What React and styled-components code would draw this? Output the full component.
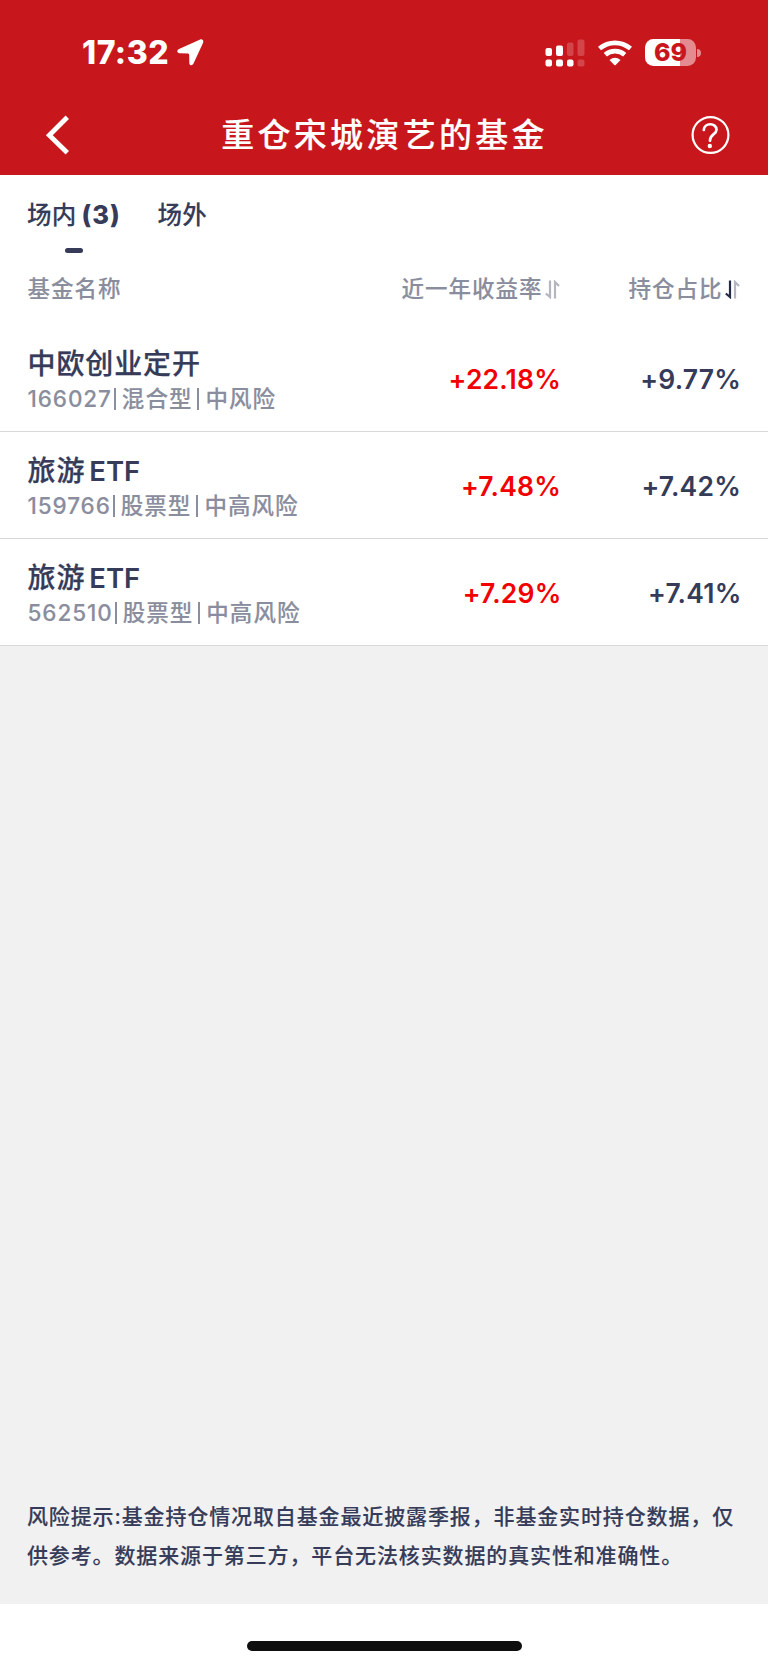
import React, { useState } from "react";
import styled, { createGlobalStyle } from "styled-components";

const GlobalStyle = createGlobalStyle`
	* {
		box-sizing: border-box;
	}
	body {
		margin: 0;
		background: #fff;
		font-family: Inter, "Noto Sans CJK SC", sans-serif;
		font-weight: 500;
		color: #353b59;
		-webkit-text-stroke: 0.12px currentColor;
	}
	button {
		padding: 0;
		border: 0;
		background: none;
		font: inherit;
		color: inherit;
	}
`;

const Page = styled.div`
	display: flex;
	flex-direction: column;
	width: 768px;
	height: 1665px;
	overflow: hidden;
	background: #f1f1f1;
`;

const Header = styled.header`
	flex: none;
	height: 174.5px;
	background: #c7171c;
	color: #fff;
`;

const StatusBar = styled.div`
	display: flex;
	align-items: center;
	justify-content: space-between;
	height: 96px;
	padding: 9px 67.5px 0 82px;
`;

const StatusGroup = styled.div`
	display: flex;
	align-items: center;
	gap: ${props => props.$gap}px;
`;

const Time = styled.span`
	width: 87px;
	font-size: 32px;
	font-weight: 800;
	line-height: 38px;
	letter-spacing: 0.5px;
	white-space: nowrap;
	-webkit-text-stroke: 0;
`;

const Battery = styled.div`
	display: flex;
	align-items: center;
	gap: 1px;
`;

const BatteryBody = styled.div`
	width: 51px;
	height: 27px;
	border-radius: 8.5px;
	background: linear-gradient(90deg, #fff 69%, #e38b8e 69%);
	color: #c7171c;
	font-size: 25px;
	font-weight: 800;
	line-height: 27px;
	text-align: center;
	-webkit-text-stroke: 0;
`;

const BatteryCap = styled.div`
	width: 3.5px;
	height: 8px;
	border-radius: 0 4px 4px 0;
	background: #e38b8e;
`;

const NavBar = styled.div`
	display: flex;
	align-items: center;
	justify-content: space-between;
	height: 78px;
	padding: 0 38px 0 45px;
`;

const NavButton = styled.button`
	display: flex;
	width: ${props => props.$width}px;
	justify-content: ${props => props.$align};
`;

const Title = styled.h1`
	margin: 0;
	font-size: 33px;
	font-weight: 500;
	line-height: 48px;
	letter-spacing: 3.3px;
`;

const Panel = styled.main`
	flex: none;
	background: #fff;
`;

const Tabs = styled.nav`
	display: flex;
	gap: 37px;
	height: 82px;
	padding: 21px 27px 0;
`;

const Tab = styled.button`
	display: flex;
	flex-direction: column;
	align-items: center;
	font-size: 24.5px;
	line-height: 38px;
	letter-spacing: 0.3px;
	&:after {
		content: '';
		width: 18px;
		height: 5.5px;
		margin-top: 14px;
		border-radius: 3px;
		background: ${props => props.$active ? "#353b59" : "transparent"};
	}
`;

const Count = styled.b`
	margin-left: 5px;
	font-size: 25.5px;
	font-weight: 800;
	letter-spacing: 0.9px;
	-webkit-text-stroke: 0;
`;

const Columns = styled.div`
	display: grid;
	grid-template-columns: 1fr 260px 180px;
	align-items: center;
	padding: 0 28px 0 27.5px;
`;

const HeadRow = styled(Columns)`
	height: 68px;
	padding-bottom: 3px;
	color: #8a8d9d;
	font-size: 22.5px;
	line-height: 34px;
	letter-spacing: 1px;
`;

const HeadCell = styled.div`
	display: flex;
	align-items: center;
	justify-content: flex-end;
	gap: 2.5px;
`;

const FundRow = styled(Columns)`
	height: 107px;
	padding-top: 2px;
	border-bottom: 1px solid #d8d9db;
`;

const FundInfo = styled.div`
	padding-top: 4px;
`;

const FundName = styled.div`
	display: flex;
	gap: 4px;
	font-size: 28px;
	line-height: 36px;
	letter-spacing: 0.9px;
	-webkit-text-stroke: 0.25px currentColor;
`;

const Suffix = styled.span`
	font-size: 27.5px;
	font-weight: 600;
	letter-spacing: 0;
	-webkit-text-stroke: 0;
`;

const FundMeta = styled.div`
	display: flex;
	color: #8a8d9d;
	font-size: 22.5px;
	line-height: 34px;
	letter-spacing: 1.05px;
	white-space: pre;
`;

const Code = styled.span`
	letter-spacing: 0.9px;
`;

const Bar = styled.i`
	align-self: center;
	width: 2px;
	height: 22px;
	margin: ${props => props.$tight ? "0 6px 0 2px" : "0 6px 0 5px"};
	background: #8a8d9d;
`;

const Rate = styled.div`
	margin-right: -1px;
	color: ${props => props.$up ? "#f20000" : "#353b59"};
	font-size: 26.5px;
	font-weight: 600;
	line-height: 36px;
	letter-spacing: 0.2px;
	text-align: right;
	-webkit-text-stroke: 0;
`;

const Notice = styled.p`
	flex: none;
	margin: auto 0 0;
	padding: 0 27px 29px;
	font-size: 21px;
	line-height: 39px;
	letter-spacing: 0.87px;
	white-space: nowrap;
`;

const HomeArea = styled.footer`
	display: flex;
	flex: none;
	justify-content: center;
	height: 61px;
	padding-top: 37px;
	background: #fff;
`;

const HomeIndicator = styled.div`
	width: 275px;
	height: 9.5px;
	border-radius: 5px;
	background: #0e0e0e;
`;

const LocationIcon = () => (
	<svg width="27" height="27" viewBox="0 0 27 27" fill="#fff">
		<path d="M23.2.5 2 10.1C-.6 11.4-.1 14.1 2.6 14.2L11 14.4Q12.2 14.5 12.2 15.7L12.3 24C12.4 26.8 15.3 27.1 16.5 24.6L26 4C27 1.5 25.3-.4 23.2.5Z" />
	</svg>
);

// dual sim: bars for the first line, dots for the second
const SignalIcon = () => (
	<svg width="40" height="28" viewBox="0 0 40 28" fill="#fff">
		<rect x="0.5" y="9" width="6.5" height="8" rx="2" />
		<rect x="11" y="6.5" width="7" height="10.5" rx="2" />
		<rect x="22" y="3.5" width="6.5" height="13.5" rx="2" opacity="0.2" />
		<rect x="32.5" y="0.5" width="7" height="16.5" rx="2" opacity="0.2" />
		<rect x="0.5" y="20.5" width="6.5" height="7" rx="2" />
		<rect x="11" y="20.5" width="7" height="7" rx="2" />
		<rect x="22" y="20.5" width="6.5" height="7" rx="2" />
		<rect x="32.5" y="20.5" width="7" height="7" rx="2" opacity="0.2" />
	</svg>
);

const WifiIcon = () => (
	<svg width="36" height="26" viewBox="0 0 36 26" fill="none">
		<path d="M2.5 8.5Q9.5 2.8 18 2.8T33.5 8.5" stroke="#fff" strokeWidth="4.8" />
		<path d="M8.3 14.8Q12.5 11.2 18 11.2T27.7 14.8" stroke="#fff" strokeWidth="4.8" />
		<path d="M12.5 20Q18 15.5 23.5 20L18.7 25Q18 25.6 17.3 25Z" fill="#fff" />
	</svg>
);

const BackIcon = () => (
	<svg width="25" height="40" viewBox="0 0 25 40" fill="none">
		<path d="M22.3 2.3 4.3 20.2 22.3 37.7" stroke="#fff" strokeWidth="4.8" />
	</svg>
);

const HelpIcon = () => (
	<svg width="39" height="39" viewBox="0 0 39 39" fill="none" stroke="#fff" strokeWidth="2.2">
		<circle cx="19.5" cy="19" r="17.9" />
		<path d="M12.8 14C13 6.5 25.5 6.3 25.5 13.7C25.5 18.5 19 18 19 24.7" strokeWidth="2.7" strokeLinecap="round" />
		<circle cx="18.8" cy="30" r="2.2" fill="#fff" stroke="none" />
	</svg>
);

const SortIcon = ({ active }) => (
	<svg width="15" height="19" viewBox="0 0 15 19" fill="none" strokeWidth="2.2">
		<path d="M5 0.5V17L0.8 13.5" stroke={active ? "#252a49" : "#b4b6c1"} />
		<path d="M10 18.5V2L14 6" stroke="#b4b6c1" />
	</svg>
);

const funds = [
	{ name: "中欧创业定开", code: "166027", type: "混合型", risk: "中风险", year: "+22.18%", ratio: "+9.77%" },
	{ name: "旅游", suffix: "ETF", code: "159766", type: "股票型", risk: "中高风险", year: "+7.48%", ratio: "+7.42%" },
	{ name: "旅游", suffix: "ETF", code: "562510", type: "股票型", risk: "中高风险", year: "+7.29%", ratio: "+7.41%" },
];

const App = () => {

	const [tab, setTab] = useState("in");

	return (
		<>
			<GlobalStyle />
			<Page>
				<Header>
					<StatusBar>
						<StatusGroup $gap={7.5}>
							<Time>17:32</Time>
							<LocationIcon />
						</StatusGroup>
						<StatusGroup $gap={12}>
							<SignalIcon />
							<WifiIcon />
							<Battery>
								<BatteryBody>69</BatteryBody>
								<BatteryCap />
							</Battery>
						</StatusGroup>
					</StatusBar>
					<NavBar>
						<NavButton $width={33} $align="flex-start"><BackIcon /></NavButton>
						<Title>重仓宋城演艺的基金</Title>
						<NavButton $width={39} $align="flex-end"><HelpIcon /></NavButton>
					</NavBar>
				</Header>
				<Panel>
					<Tabs>
						<Tab $active={tab === "in"} onClick={() => setTab("in")}>
							<span>场内<Count>(3)</Count></span>
						</Tab>
						<Tab $active={tab === "out"} onClick={() => setTab("out")}>
							<span>场外</span>
						</Tab>
					</Tabs>
					<HeadRow>
						<div>基金名称</div>
						<HeadCell>近一年收益率<SortIcon /></HeadCell>
						<HeadCell>持仓占比<SortIcon active /></HeadCell>
					</HeadRow>
					{funds.map(item => (
						<FundRow key={item.code}>
							<FundInfo>
								<FundName>
									{item.name}
									{item.suffix && <Suffix>{item.suffix}</Suffix>}
								</FundName>
								<FundMeta>
									<Code>{item.code}</Code>
									<Bar $tight />
									{item.type}
									<Bar />
									{item.risk}
								</FundMeta>
							</FundInfo>
							<Rate $up>{item.year}</Rate>
							<Rate>{item.ratio}</Rate>
						</FundRow>
					))}
				</Panel>
				<Notice>
					风险提示:基金持仓情况取自基金最近披露季报，非基金实时持仓数据，仅
					<br />
					供参考。数据来源于第三方，平台无法核实数据的真实性和准确性。
				</Notice>
				<HomeArea>
					<HomeIndicator />
				</HomeArea>
			</Page>
		</>
	)
}

export default App;
